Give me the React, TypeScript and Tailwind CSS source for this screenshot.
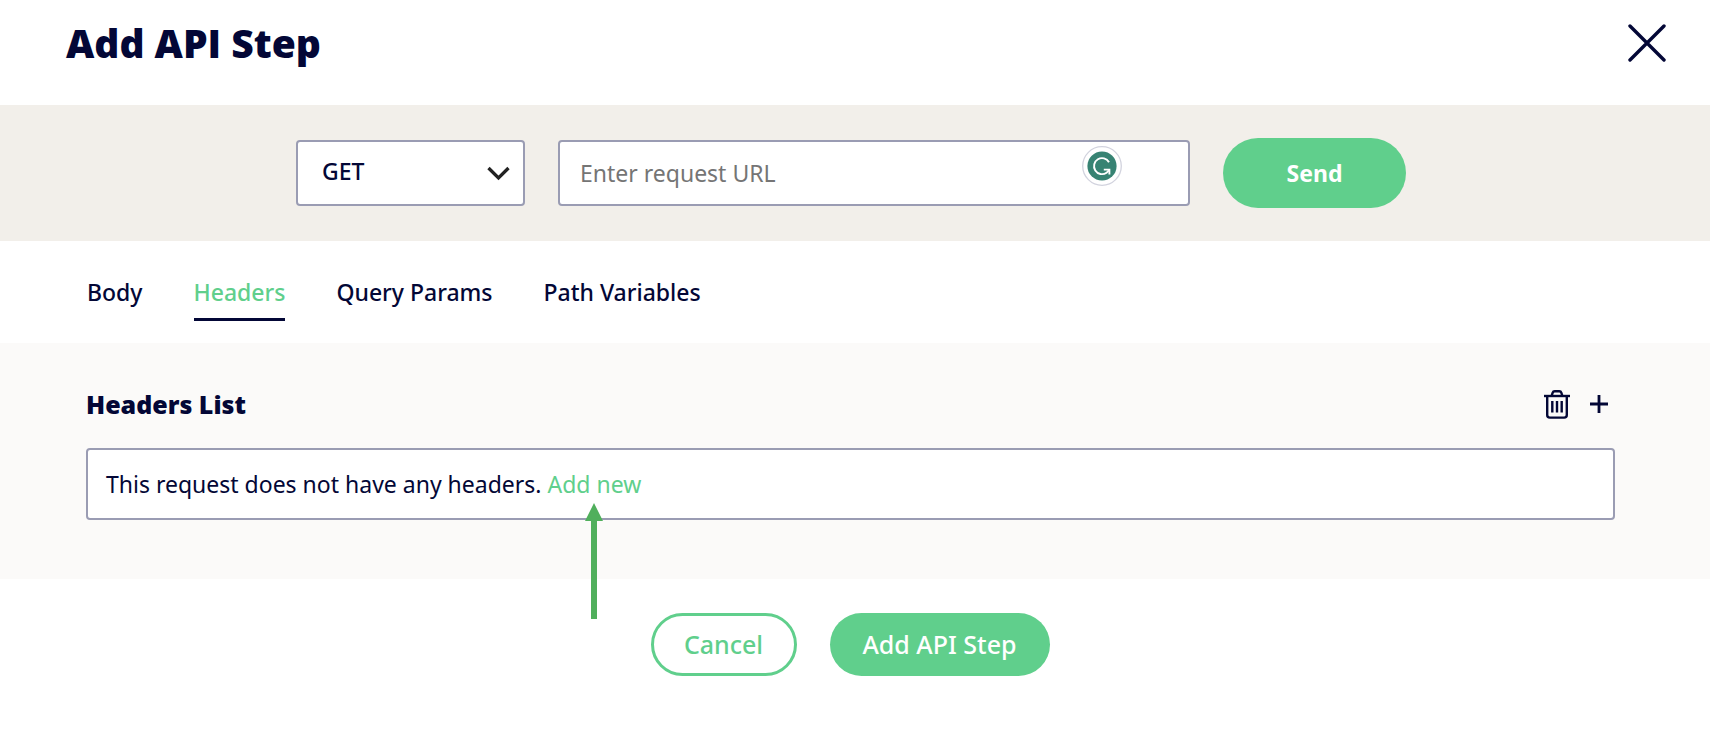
import { useState } from "react";

const tabs = ["Body", "Headers", "Query Params", "Path Variables"];

function CloseIcon() {
  return (
    <svg width="38" height="38" viewBox="0 0 38 38" fill="none" stroke="currentColor" strokeWidth="3.4" strokeLinecap="round" aria-hidden="true">
      <path d="M2 2L36 36M36 2L2 36" />
    </svg>
  );
}

function ChevronIcon() {
  return (
    <svg className="pointer-events-none absolute right-[15px] top-[26px]" width="23" height="15" viewBox="0 0 23 15" fill="none" stroke="#222" strokeWidth="3.3" aria-hidden="true">
      <path d="M1.5 2L11.5 12L21.5 2" />
    </svg>
  );
}

function GrammarIcon() {
  return (
    <svg className="pointer-events-none absolute right-[68px] top-[6px]" width="40" height="40" viewBox="0 0 40 40" fill="none" aria-hidden="true">
      <circle cx="20" cy="20" r="19.3" fill="#fff" stroke="#d2d3de" strokeWidth="1.3" />
      <circle cx="20" cy="20" r="14.6" fill="#378373" />
      <path d="M27 16.2A8 8 0 1 0 24.5 26.8L27.3 23.9" stroke="#fff" strokeWidth="1.9" />
      <path d="M21.8 23.6H27.4V28.6" stroke="#fff" strokeWidth="1.9" />
    </svg>
  );
}

function TrashIcon() {
  return (
    <svg width="26" height="29" viewBox="0 0 26 29" fill="none" stroke="currentColor" strokeWidth="2.4" aria-hidden="true">
      <path d="M0 6H26" />
      <path d="M7.6 6L8.6 2.8Q9.1 1.3 10.7 1.3H15.3Q16.9 1.3 17.4 2.8L18.4 6" />
      <path d="M3.2 6V25Q3.2 27.6 5.8 27.6H20.2Q22.8 27.6 22.8 25V6" />
      <path d="M8.3 11V22.5M13 11V22.5M17.7 11V22.5" />
    </svg>
  );
}

function PlusIcon() {
  return (
    <svg width="18" height="18" viewBox="0 0 18 18" stroke="currentColor" strokeWidth="2.8" aria-hidden="true">
      <path d="M0 9H18M9 0V18" />
    </svg>
  );
}

function PointerArrow() {
  return (
    <svg className="pointer-events-none absolute left-[38px] top-[35px] z-10" width="18" height="116" viewBox="0 0 18 116" fill="#50af5c" aria-hidden="true">
      <path d="M9 0L18 18H12V116H6V18H0Z" />
    </svg>
  );
}

export default function App() {
  const [active, setActive] = useState("Headers");
  return (
    <main className="min-h-screen bg-white pr-1.5 font-['Noto_Sans',sans-serif] text-[23px] leading-8 text-[#030736]">
      <header className="flex h-[105px] items-start justify-between pl-[66px] pr-11 pt-5">
        <h1 className="font-['Open_Sans',sans-serif] text-[39px] font-extrabold leading-[46px]">Add API Step</h1>
        <button type="button" aria-label="Close" className="mt-1">
          <CloseIcon />
        </button>
      </header>

      <form className="flex h-[136px] items-center justify-center gap-[33px] bg-[#f2efea] pr-2" onSubmit={(e) => e.preventDefault()}>
        <div className="relative w-[229px]">
          <select aria-label="Method" defaultValue="GET" className="h-[66px] w-full appearance-none rounded border-2 border-[#9a9cb3] bg-white pb-1 pl-6 pr-12 font-medium">
            <option>GET</option>
            <option>POST</option>
            <option>PUT</option>
            <option>DELETE</option>
          </select>
          <ChevronIcon />
        </div>
        <div className="relative w-full max-w-[632px]">
          <input type="text" aria-label="Request URL" placeholder="Enter request URL" className="h-[66px] w-full rounded border-2 border-[#9a9cb3] bg-white pl-5 pr-28 placeholder:text-[#757575]" />
          <GrammarIcon />
        </div>
        <button type="submit" className="h-[70px] w-[183px] shrink-0 rounded-full bg-[#60cf8c] font-bold text-white">
          Send
        </button>
      </form>

      <nav className="flex h-[102px] items-start gap-[51px] pl-[87px] pt-8 font-medium">
        {tabs.map((tab) => (
          <button
            key={tab}
            type="button"
            onClick={() => setActive(tab)}
            className={
              tab === active
                ? "h-12 border-b-3 border-[#030736] pb-2 text-[#60cf8c]"
                : "h-12 border-b-3 border-transparent pb-2"
            }
          >
            {tab}
          </button>
        ))}
      </nav>

      <section className="h-[236px] bg-[#fbfaf9] pl-[86px] pr-[95px] pt-[43px]">
        <div className="flex items-center justify-between pr-[7px]">
          <h2 className="font-['Open_Sans',sans-serif] text-[25px] font-extrabold leading-9">Headers List</h2>
          <div className="flex items-center gap-5">
            <button type="button" aria-label="Delete all headers">
              <TrashIcon />
            </button>
            <button type="button" aria-label="Add header">
              <PlusIcon />
            </button>
          </div>
        </div>
        <div className="mt-[26px] flex h-[72px] items-center rounded border-2 border-[#9a9cb3] bg-white px-[18px]">
          <p>
            This request does not have any headers.{" "}
            <a href="#add" className="relative inline-block text-[#60cf8c]">
              Add new
              <PointerArrow />
            </a>
          </p>
        </div>
      </section>

      <footer className="flex justify-center gap-[33px] pr-2.5 pt-[34px] text-[25px] font-medium">
        <button type="button" className="h-[63px] w-[146px] rounded-full border-3 border-[#60cf8c] pb-0.5 text-[#60cf8c]">
          Cancel
        </button>
        <button type="button" className="h-[63px] w-[220px] rounded-full bg-[#60cf8c] pb-0.5 text-white">
          Add API Step
        </button>
      </footer>
    </main>
  );
}
